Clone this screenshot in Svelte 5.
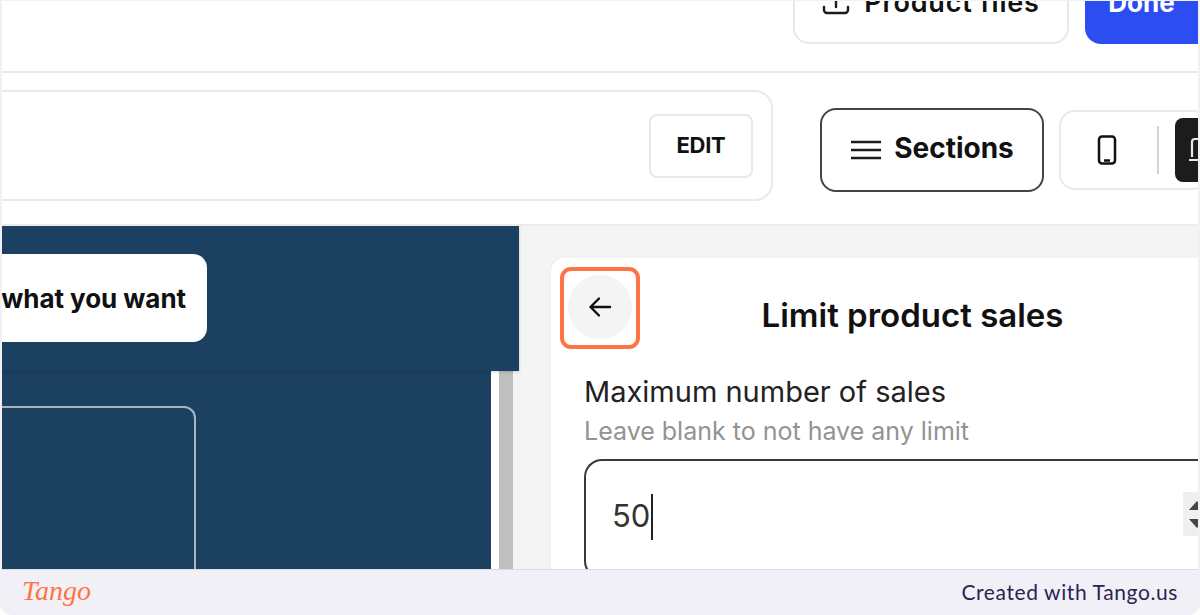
<script>
	let sales = $state('50');
</script>

<div class="page">
	<header class="topbar">
		<button class="files">
			<svg width="28" height="28" viewBox="0 0 28 28" fill="none" stroke="#1c1c1c" stroke-width="2.400" stroke-linecap="round">
				<path d="M14 4v15M2 19v3a3 3 0 0 0 3 3h18a3 3 0 0 0 3-3v-3" />
			</svg>
			Product files
		</button>
		<button class="done">Done</button>
	</header>

	<div class="toolbar">
		<div class="url">
			<button class="edit">EDIT</button>
		</div>
		<button class="sections">
			<svg width="32" height="22" viewBox="0 0 32 22" stroke="#1c1c1c" stroke-width="2.600">
				<path d="M1 3h30M1 11h30M1 19h30" />
			</svg>
			<span>Sections</span>
		</button>
		<div class="devices">
			<span class="phone">
				<svg width="20" height="30" viewBox="0 0 20 30" fill="none" stroke="#111" stroke-width="2.500">
					<rect x="2" y="1.500" width="16" height="27" rx="3" />
					<path d="M7 25.500h6" />
				</svg>
			</span>
			<span class="divider"></span>
			<span class="desktop">
				<svg width="10" height="28" viewBox="0 0 10 28" fill="none" stroke="#e8e8e8" stroke-width="2.200">
					<path d="M3 21V6a3 3 0 0 1 3-3h4M0 24h10" />
				</svg>
			</span>
		</div>
	</div>

	<main class="main">
		<section class="preview">
			<div class="hero">
				<div class="cta">what you want</div>
			</div>
			<div class="lower">
				<div class="lower-content">
					<div class="outline"></div>
				</div>
				<div class="scroll"><span class="thumb"></span></div>
			</div>
		</section>

		<section class="side">
			<div class="card">
				<div class="card-head">
					<button class="back" aria-label="Back">
						<svg width="24" height="24" viewBox="0 0 24 24" fill="none" stroke="#111" stroke-width="2.400" stroke-linecap="round" stroke-linejoin="round">
							<path d="M22 12H2.500M11 3.500 2.500 12l8.500 8.500" />
						</svg>
					</button>
					<h2>Limit product sales</h2>
				</div>
				<div class="highlight"></div>
				<div class="field">
					<div class="label">Maximum number of sales</div>
					<div class="hint">Leave blank to not have any limit</div>
					<div class="input">
						<span class="value">{sales}</span><span class="caret"></span>
						<span class="spinner">
							<i class="up"></i>
							<i class="down"></i>
						</span>
					</div>
				</div>
			</div>
		</section>
	</main>

	<footer class="footer">
		<span class="logo">Tango</span>
		<span class="credit">Created with Tango.us</span>
	</footer>
</div>

<style>
	:global(body) {
		margin: 0;
		background: #fff;
	}

	.page {
		width: 1200px;
		height: 615px;
		box-sizing: border-box;
		padding: 1px 2px 0;
		background: #f2f0f7;
		border-radius: 0 0 12px 12px;
		overflow: hidden;
		display: flex;
		flex-direction: column;
		font-family: Inter, "Open Sans", sans-serif;
		color: #111;
	}

	button {
		font-family: inherit;
		background: #fff;
		color: inherit;
		padding: 0;
	}

	.topbar {
		height: 72px;
		flex-shrink: 0;
		box-sizing: border-box;
		background: #fff;
		border-bottom: 2px solid #e9e9e9;
		display: flex;
		justify-content: flex-end;
		align-items: flex-end;
		gap: 16px;
		padding-bottom: 27px;
		overflow: hidden;
	}

	.files {
		width: 276px;
		height: 70px;
		flex-shrink: 0;
		border: 2px solid #e8e8e8;
		border-radius: 16px;
		font-size: 27px;
		font-weight: 600;
		letter-spacing: 0.8px;
		display: flex;
		align-items: center;
		justify-content: center;
		gap: 14px;
		padding-bottom: 14px;
		box-sizing: border-box;
		white-space: nowrap;
	}

	.done {
		width: 113px;
		height: 70px;
		flex-shrink: 0;
		border: 0;
		border-radius: 16px 0 0 16px;
		background: #2b4df2;
		color: #fff;
		font-size: 26px;
		font-weight: 700;
		padding-bottom: 14px;
		box-sizing: border-box;
	}

	.toolbar {
		height: 153px;
		flex-shrink: 0;
		box-sizing: border-box;
		background: #fff;
		border-bottom: 2px solid #ececec;
		display: flex;
		align-items: flex-start;
		padding-top: 17px;
		overflow: hidden;
	}

	.url {
		width: 771px;
		height: 111px;
		flex-shrink: 0;
		box-sizing: border-box;
		border: 2px solid #e9e9e9;
		border-left: 0;
		border-radius: 0 18px 18px 0;
		display: flex;
		align-items: center;
		justify-content: flex-end;
		padding-right: 18px;
	}

	.edit {
		width: 104px;
		height: 64px;
		border: 2px solid #e8e8e8;
		border-radius: 8px;
		font-size: 22px;
		font-weight: 700;
		letter-spacing: -0.3px;
		box-sizing: border-box;
		padding-bottom: 2px;
	}

	.sections {
		width: 224px;
		height: 84px;
		flex-shrink: 0;
		box-sizing: border-box;
		margin: 18px 0 0 47px;
		border: 2px solid #444;
		border-radius: 16px;
		font-size: 28px;
		font-weight: 700;
		display: flex;
		align-items: center;
		justify-content: center;
		gap: 12px;
	}

	.sections span {
		margin-top: -4px;
	}

	.devices {
		width: 150px;
		height: 80px;
		flex-shrink: 0;
		box-sizing: border-box;
		margin: 20px -12px 0 15px;
		border: 2px solid #e9e9e9;
		border-radius: 16px;
		display: flex;
		align-items: center;
	}

	.phone {
		width: 92px;
		margin-right: 4px;
		flex-shrink: 0;
		display: flex;
		justify-content: center;
	}

	.divider {
		width: 2px;
		height: 48px;
		flex-shrink: 0;
		background: #d4d4d4;
	}

	.desktop {
		width: 40px;
		height: 64px;
		flex-shrink: 0;
		margin-left: 16px;
		background: #1c1c1c;
		border-radius: 8px;
		display: flex;
		align-items: center;
		justify-content: flex-start;
		padding-left: 14px;
		box-sizing: border-box;
		overflow: hidden;
	}

	.main {
		height: 343px;
		flex-shrink: 0;
		display: flex;
		overflow: hidden;
	}

	.preview {
		width: 517px;
		flex-shrink: 0;
		display: flex;
		flex-direction: column;
	}

	.hero {
		height: 145px;
		flex-shrink: 0;
		box-sizing: border-box;
		background: #1c4060;
		padding-top: 28px;
		box-shadow: 0 1px 3px rgba(0, 0, 0, 0.18);
		position: relative;
	}

	.cta {
		width: 205px;
		height: 88px;
		box-sizing: border-box;
		background: #fff;
		border-radius: 0 14px 14px 0;
		font-size: 26px;
		font-weight: 700;
		letter-spacing: -0.05px;
		display: flex;
		align-items: center;
		justify-content: flex-end;
		padding-right: 21px;
		white-space: nowrap;
	}

	.lower {
		flex: 1;
		display: flex;
		min-height: 0;
	}

	.lower-content {
		width: 489px;
		flex-shrink: 0;
		background: #1c4060;
		padding-top: 35px;
		box-sizing: border-box;
	}

	.outline {
		width: 194px;
		height: 220px;
		box-sizing: border-box;
		border: 2px solid #a9b6c2;
		border-left: 0;
		border-radius: 0 12px 0 0;
	}

	.scroll {
		flex: 1;
		display: flex;
		background: #f4f4f4;
	}

	.thumb {
		width: 14px;
		margin-left: 8px;
		background: #bfbfbf;
		box-shadow: -8px 0 0 #fff;
	}

	.side {
		flex: 1;
		background: #f4f4f4;
		padding: 32px 0 0 32px;
		min-width: 0;
	}

	.card {
		position: relative;
		height: 340px;
		box-sizing: border-box;
		background: #fff;
		border-radius: 14px 0 0 0;
		box-shadow: 0 0 4px rgba(0, 0, 0, 0.04);
		padding: 17px 0 0 17px;
	}

	.card-head {
		display: flex;
		align-items: center;
	}

	.back {
		width: 64px;
		height: 64px;
		flex-shrink: 0;
		border: 0;
		border-radius: 50%;
		background: #f4f4f4;
		display: flex;
		align-items: center;
		justify-content: center;
	}

	h2 {
		margin: 0;
		flex: 1;
		padding: 16px 5px 0 0;
		text-align: center;
		font-size: 33px;
		font-weight: 600;
	}

	.highlight {
		position: absolute;
		left: 9px;
		top: 9px;
		width: 80px;
		height: 82px;
		box-sizing: border-box;
		border: 4px solid #ff7442;
		border-radius: 11px;
	}

	.field {
		padding: 35px 0 0 16px;
	}

	.label {
		font-size: 29px;
		line-height: 36px;
		font-weight: 400;
		color: #222;
		white-space: nowrap;
	}

	.hint {
		font-size: 25px;
		line-height: 34px;
		margin-top: 4px;
		color: #939393;
		white-space: nowrap;
	}

	.input {
		position: relative;
		height: 120px;
		margin-top: 11px;
		box-sizing: border-box;
		border: 2px solid #3a3a3a;
		border-right: 0;
		border-radius: 18px 0 0 18px;
		padding: 35px 0 0 26px;
		display: flex;
		align-items: flex-start;
		font-size: 31px;
		line-height: 40px;
		color: #333;
	}

	.caret {
		width: 2px;
		height: 46px;
		margin: -2px 0 0 1px;
		background: #222;
	}

	.spinner {
		position: absolute;
		right: 0;
		top: 31px;
		width: 15px;
		height: 44px;
		background: #efefef;
		overflow: hidden;
	}

	.spinner i {
		position: absolute;
		left: 6px;
		width: 0;
		height: 0;
		border-left: 8px solid transparent;
		border-right: 8px solid transparent;
	}

	.spinner .up {
		top: 9px;
		border-bottom: 9px solid #444;
	}

	.spinner .down {
		top: 27px;
		border-top: 9px solid #444;
	}

	.footer {
		flex: 1;
		display: flex;
		align-items: center;
		justify-content: space-between;
		padding: 0 20px 3px 20px;
		border-top: 1px solid #dcdae2;
	}

	.logo {
		font-family: "Liberation Serif", serif;
		font-style: italic;
		font-size: 28px;
		color: #ff7442;
	}

	.credit {
		font-family: Lato, "Open Sans", sans-serif;
		font-size: 21px;
		letter-spacing: 0.6px;
		color: #2c2350;
	}
</style>
